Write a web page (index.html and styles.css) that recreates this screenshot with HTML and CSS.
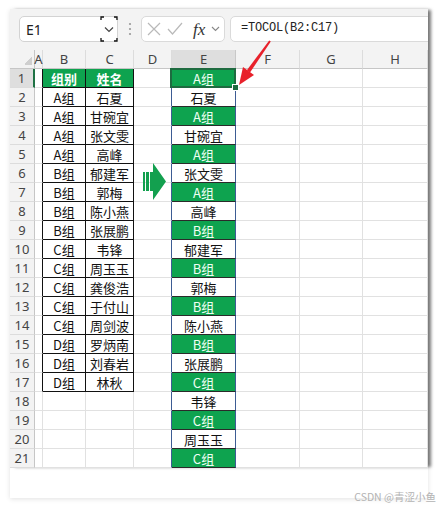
FILE: index.html
```html
<!DOCTYPE html>
<html>
<head>
<meta charset="utf-8">
<link rel="stylesheet" href="styles.css">
</head>
<body>
<div class="frame">
  <div class="app">
    <div class="toolbar">
      <div class="namebox">
        <span class="ref">E1</span>
        <svg class="dd" width="18" height="26" viewBox="0 0 18 26">
          <path d="M1 4V1H4M14 1H17V4M17 22V25H14M4 25H1V22" fill="none" stroke="#111" stroke-width="1.3"/>
          <path d="M5 11.5L9 15.5L13 11.5" fill="none" stroke="#444" stroke-width="1.2"/>
        </svg>
      </div>
      <div class="dots">
        <svg width="4" height="14" viewBox="0 0 4 14"><circle cx="2" cy="2" r="1.1" fill="#999"/><circle cx="2" cy="7" r="1.1" fill="#999"/><circle cx="2" cy="12" r="1.1" fill="#999"/></svg>
      </div>
      <div class="fnbox">
        <svg width="14" height="14" viewBox="0 0 14 14"><path d="M1 1L13 13M13 1L1 13" stroke="#b9b9b9" stroke-width="1.2" fill="none"/></svg>
        <svg width="16" height="14" viewBox="0 0 16 14"><path d="M1 7L5.5 12L15 1" stroke="#b9b9b9" stroke-width="1.2" fill="none"/></svg>
        <span class="fx">fx</span>
        <svg width="9" height="6" viewBox="0 0 9 6"><path d="M1 1L4.5 4.5L8 1" stroke="#888" stroke-width="1.1" fill="none"/></svg>
      </div>
      <div class="formula">=TOCOL(B2:C17)</div>
    </div>
    <div class="sheet">
      <span class="corner"></span><span class="ch">A</span><span class="ch">B</span><span class="ch">C</span><span class="ch">D</span><span class="ch on">E</span><span class="ch">F</span><span class="ch">G</span><span class="ch">H</span>
      <span class="rh on">1</span><span class="ta"></span><span class="t th">组别</span><span class="t th">姓名</span><span class="dx"></span><span class="e eg sel">A组</span><span></span><span></span><span></span>
      <span class="rh">2</span><span class="ta"></span><span class="t">A组</span><span class="t">石夏</span><span class="dx"></span><span class="e">石夏</span><span></span><span></span><span></span>
      <span class="rh">3</span><span class="ta"></span><span class="t">A组</span><span class="t">甘碗宜</span><span class="dx"></span><span class="e eg">A组</span><span></span><span></span><span></span>
      <span class="rh">4</span><span class="ta"></span><span class="t">A组</span><span class="t">张文雯</span><span class="dx"></span><span class="e">甘碗宜</span><span></span><span></span><span></span>
      <span class="rh">5</span><span class="ta"></span><span class="t">A组</span><span class="t">高峰</span><span class="dx"></span><span class="e eg">A组</span><span></span><span></span><span></span>
      <span class="rh">6</span><span class="ta"></span><span class="t">B组</span><span class="t">郁建军</span><span class="dx"></span><span class="e">张文雯</span><span></span><span></span><span></span>
      <span class="rh">7</span><span class="ta"></span><span class="t">B组</span><span class="t">郭梅</span><span class="dx"></span><span class="e eg">A组</span><span></span><span></span><span></span>
      <span class="rh">8</span><span class="ta"></span><span class="t">B组</span><span class="t">陈小燕</span><span class="dx"></span><span class="e">高峰</span><span></span><span></span><span></span>
      <span class="rh">9</span><span class="ta"></span><span class="t">B组</span><span class="t">张展鹏</span><span class="dx"></span><span class="e eg">B组</span><span></span><span></span><span></span>
      <span class="rh">10</span><span class="ta"></span><span class="t">C组</span><span class="t">韦锋</span><span class="dx"></span><span class="e">郁建军</span><span></span><span></span><span></span>
      <span class="rh">11</span><span class="ta"></span><span class="t">C组</span><span class="t">周玉玉</span><span class="dx"></span><span class="e eg">B组</span><span></span><span></span><span></span>
      <span class="rh">12</span><span class="ta"></span><span class="t">C组</span><span class="t">龚俊浩</span><span class="dx"></span><span class="e">郭梅</span><span></span><span></span><span></span>
      <span class="rh">13</span><span class="ta"></span><span class="t">C组</span><span class="t">于付山</span><span class="dx"></span><span class="e eg">B组</span><span></span><span></span><span></span>
      <span class="rh">14</span><span class="ta"></span><span class="t">C组</span><span class="t">周剑波</span><span class="dx"></span><span class="e">陈小燕</span><span></span><span></span><span></span>
      <span class="rh">15</span><span class="ta"></span><span class="t">D组</span><span class="t">罗炳南</span><span class="dx"></span><span class="e eg">B组</span><span></span><span></span><span></span>
      <span class="rh">16</span><span class="ta"></span><span class="t">D组</span><span class="t">刘春岩</span><span class="dx"></span><span class="e">张展鹏</span><span></span><span></span><span></span>
      <span class="rh">17</span><span class="ta"></span><span class="t">D组</span><span class="t">林秋</span><span class="dx"></span><span class="e eg">C组</span><span></span><span></span><span></span>
      <span class="rh">18</span><span></span><span></span><span></span><span class="dx"></span><span class="e">韦锋</span><span></span><span></span><span></span>
      <span class="rh">19</span><span></span><span></span><span></span><span class="dx"></span><span class="e eg">C组</span><span></span><span></span><span></span>
      <span class="rh">20</span><span></span><span></span><span></span><span class="dx"></span><span class="e">周玉玉</span><span></span><span></span><span></span>
      <span class="rh">21</span><span></span><span></span><span></span><span class="dx"></span><span class="e eg">C组</span><span></span><span></span><span></span>
    </div>
  </div>
</div>

<svg class="garrow" width="23" height="37" viewBox="0 0 23 37">
  <rect x="0" y="9" width="2" height="19" fill="#13a04f"/>
  <rect x="3" y="9" width="3" height="19" fill="#13a04f"/>
  <path d="M7 9H10V0L23 18.5L10 37V28H7Z" fill="#13a04f"/>
</svg>

<svg class="rarrow" width="440" height="510" viewBox="0 0 440 510">
  <path d="M269.2 40.4L270.8 41.6L250 72.6L246.8 70.2Z" fill="#e8212b"/>
  <path d="M239 85L254 75L243 67Z" fill="#e8212b"/>
</svg>

<div class="mark">CSDN @青涩小鱼</div>
</body>
</html>
```

FILE: styles.css
```css
body {
  margin: 0;
  width: 440px;
  height: 510px;
  background: #fff;
  position: relative;
  overflow: hidden;
  font-family: "Noto Sans", "Noto Sans CJK SC", sans-serif;
}

.frame {
  margin: 9px 0 0 10px;
  width: 418px;
  height: 489px;
  background: #fff;
  box-shadow: 0 1px 5px rgba(0, 0, 0, 0.12);
}

.app {
  box-shadow: 4px 0 3px -1px rgba(0, 0, 0, 0.5);
}

.toolbar {
  height: 41px;
  box-sizing: border-box;
  padding: 7px 0 0 9px;
  background: #f3f3f3;
  display: flex;
  align-items: flex-start;
  overflow: hidden;
}

.namebox {
  width: 99px;
  height: 26px;
  box-sizing: border-box;
  border: 1px solid #d3d3d3;
  border-radius: 5px;
  background: #fff;
  display: flex;
  align-items: center;
  position: relative;
}

.ref {
  flex: 1;
  padding-left: 6px;
  font-size: 14px;
  color: #222;
}

.dd {
  position: absolute;
  right: -1px;
  top: -1px;
}

.dots {
  width: 23px;
  height: 26px;
  display: flex;
  align-items: center;
  justify-content: center;
}

.fnbox {
  width: 84px;
  height: 26px;
  box-sizing: border-box;
  margin-right: 5px;
  border: 1px solid #dadada;
  border-radius: 5px;
  background: #fff;
  display: flex;
  align-items: center;
  padding-left: 5px;
  gap: 6px;
}

.fx {
  font-family: "Liberation Serif", serif;
  font-style: italic;
  font-size: 17px;
  color: #333;
  margin-left: 4px;
  line-height: 1;
}

.formula {
  flex: 1;
  height: 26px;
  box-sizing: border-box;
  margin-right: -6px;
  border: 1px solid #dadada;
  border-radius: 5px;
  background: #fff;
  padding: 4px 0 0 10px;
  font-family: "Liberation Mono", monospace;
  font-size: 12px;
  letter-spacing: -0.2px;
  color: #222;
}

.sheet {
  display: grid;
  grid-template-columns: 25px 8px 43px 48px 38px 64px 64px 63px 65px;
  grid-auto-rows: 19px;
  background: #fff;
}

.sheet > * {
  box-sizing: border-box;
  border-right: 1px solid #e1e1e1;
  border-bottom: 1px solid #e1e1e1;
  display: flex;
  align-items: center;
  justify-content: center;
  font-family: "Noto Sans CJK SC", "Noto Sans", sans-serif;
  font-size: 13px;
  color: #111;
  white-space: nowrap;
  line-height: 1;
}

.sheet > .corner {
  background: #f3f3f3 linear-gradient(135deg, transparent 60%, #cfcfcf 60%) no-repeat right 2px bottom 3px / 10px 10px;
  border-right-color: #c6c6c6;
  border-bottom-color: #c6c6c6;
}

.sheet > .ch {
  background: #f3f3f3;
  border-bottom-color: #c6c6c6;
  border-right-color: #dcdcdc;
  color: #444;
  font-family: "Noto Sans", sans-serif;
}

.sheet > .ch.on {
  background: #dedede;
  border-right-color: #c8c8c8;
}

.sheet > .rh {
  background: #f3f3f3;
  border-right-color: #c6c6c6;
  border-bottom-color: #dcdcdc;
  color: #444;
  font-family: "Noto Sans", sans-serif;
}

.sheet > .rh.on {
  background: #dedede;
  border-right: 2px solid #1f7244;
}

.sheet > .ta {
  border-right-color: #111;
}

.sheet > .t {
  border-right-color: #111;
  border-bottom-color: #111;
}

.sheet > .th {
  background: #0ea34f;
  color: #fff;
  font-weight: bold;
}

.sheet > .dx {
  border-right-color: #3d5c94;
}

.sheet > .e {
  border-right-color: #3d5c94;
  border-bottom-color: #2a2a2a;
}

.sheet > .eg {
  background: #0ea34f;
  color: #eefff3;
}

.sel {
  position: relative;
}

.sel::before {
  content: "";
  position: absolute;
  left: -2px;
  top: -1px;
  right: -1px;
  bottom: -1px;
  border: 2px solid #1e6b40;
}

.sel::after {
  content: "";
  position: absolute;
  right: -4px;
  bottom: -4px;
  width: 5px;
  height: 5px;
  background: #1e6b40;
  border: 1px solid #fff;
}

.garrow {
  position: absolute;
  left: 143px;
  top: 163px;
}

.rarrow {
  position: absolute;
  left: 0;
  top: 0;
  pointer-events: none;
}

.mark {
  position: absolute;
  right: 4px;
  top: 492px;
  font-family: "Noto Sans CJK SC", "Noto Sans", sans-serif;
  font-size: 10.5px;
  color: #b3b3b3;
  line-height: 1;
  white-space: nowrap;
}
```
